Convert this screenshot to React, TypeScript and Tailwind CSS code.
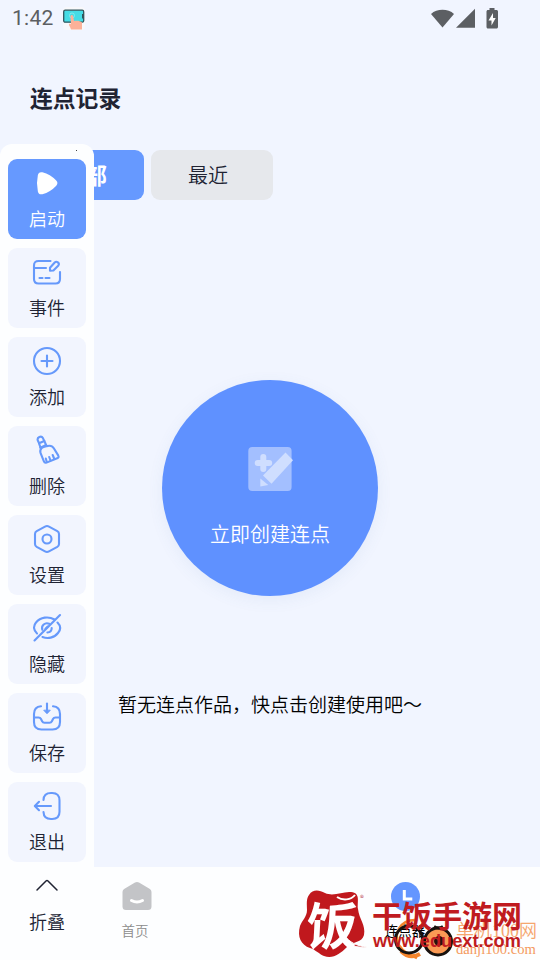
import React from 'react';

interface ToolItem {
  label: string;
  icon: React.ReactNode;
  active?: boolean;
}

const ToolIcon: React.FC<{ children: React.ReactNode }> = ({ children }) => (
  <svg
    viewBox="0 0 30 30"
    className="w-[30px] h-[30px]"
    fill="none"
    stroke="#6699fb"
    strokeWidth="2.1"
    strokeLinecap="round"
    strokeLinejoin="round"
  >
    {children}
  </svg>
);

const tools: ToolItem[] = [
  {
    label: '启动',
    active: true,
    icon: (
      <svg viewBox="0 0 30 30" className="w-[30px] h-[30px]">
        <path
          d="M9.500 8C13.500 9 18 11.500 21.500 15.200 18 19 13.500 21.500 9.500 22.500 8.500 18 8.500 12.500 9.500 8Z"
          fill="#fff"
          stroke="#fff"
          strokeWidth="7.500"
          strokeLinejoin="round"
        />
      </svg>
    ),
  },
  {
    label: '事件',
    icon: (
      <ToolIcon>
        <path d="M18.500 4H6.500C3.500 4 2 5.500 2 8.500V22c0 3 1.500 4.500 4.500 4.500h17c3 0 4.500-1.500 4.500-4.500v-7" />
        <path d="M2 11h12M7.500 21h3M13.500 21h4" />
        <path d="M18 13.700v-3l4.700-5.200c2-2 5.300.8 3.700 3l-5 5Z" />
      </ToolIcon>
    ),
  },
  {
    label: '添加',
    icon: (
      <ToolIcon>
        <circle cx="15" cy="15" r="13" />
        <path d="M15 9.500v11M9.500 15h11" />
      </ToolIcon>
    ),
  },
  {
    label: '删除',
    icon: (
      <ToolIcon>
        <path d="M7 8 5.700 5.300c-.8-3.200 3.600-5 5.200-2.200L12.300 6" />
        <path d="M7 8.300 12.300 6l1.700 3.800M7 8.300l1.500 4.200" />
        <path d="M8.300 12.700 14.200 10" />
        <path d="M9.500 13.200c-1.300 1.400-1.500 3.300-.9 5l3.200 8c.5 1.400 1.300 1.900 2.700 1.400l10.700-4.300c1.500-.6 1.800-1.500 1-2.900l-4.400-7.100c-1.400-2.300-3.800-3-6.300-2.300-2.300.6-4.300.9-6 2.200Z" />
        <path d="m14.800 27-1-3.500M18.500 25.500l-1.300-3.500M22.300 24l-1.600-4" />
      </ToolIcon>
    ),
  },
  {
    label: '设置',
    icon: (
      <ToolIcon>
        <path d="M13 2.600c1.300-.7 2.700-.7 4 0l8.300 4.500c1.200.7 1.700 1.500 1.700 2.900v10c0 1.400-.5 2.200-1.700 2.900L17 27.400c-1.300.7-2.700.7-4 0l-8.300-4.500C3.500 22.200 3 21.400 3 20V10c0-1.400.5-2.200 1.700-2.900Z" />
        <circle cx="15" cy="15" r="4.500" />
      </ToolIcon>
    ),
  },
  {
    label: '隐藏',
    icon: (
      <ToolIcon>
        <path d="M2.500 27.500 28 2" />
        <path d="M5 20.500C1.500 17.500 1 13 4 9.500 8.500 4 16.500 3 22.500 6.500M25.500 9.500C28.500 12.500 29 16.500 26 20c-3.800 5-10.500 6-15.500 4" />
        <path d="M10.300 16.800C9 12.700 13 9 17.200 10.800M19.700 15c0 2.500-1.800 4.300-4.300 4.500M13.500 15.800l2.200-2.200" />
      </ToolIcon>
    ),
  },
  {
    label: '保存',
    icon: (
      <ToolIcon>
        <path d="M9 4.200C4.500 4.500 2 7.500 2 12v8c0 5 2.500 7.500 7.500 7.500h11c5 0 7.500-2.500 7.500-7.500v-8c0-4.500-2.500-7.500-7-7.800" />
        <path d="M2 15.500h4.500c1.200 0 2 .5 2.500 1.500l1.100 2.200c.5 1 1.300 1.500 2.400 1.500h5c1.100 0 1.900-.5 2.400-1.500L21 17c.5-1 1.300-1.500 2.500-1.500H28" />
        <path d="M15 1.500V10" />
        <path d="m12 8.500 3 3.200 3-3.200Z" fill="#6699fb" strokeWidth="1" />
      </ToolIcon>
    ),
  },
  {
    label: '退出',
    icon: (
      <ToolIcon>
        <path d="M11.500 9c.2-5 2.500-7 7.500-7h1.200c5 0 7.300 2.500 7.300 7.500v11.200c0 5-2.300 7.300-7.300 7.300H19c-5 0-7.300-2-7.500-7" />
        <path d="M19 15H3M7 10.800 2.800 15 7 19.200" />
      </ToolIcon>
    ),
  },
];

const StatusBar: React.FC = () => (
  <div className="h-9 shrink-0 pl-3 pt-px flex items-center justify-between">
    <div className="flex items-center gap-2">
      <span className="w-[42px] font-['Roboto',sans-serif] text-[21px] leading-none tracking-[0.3px] text-[#5c5e62]">
        1:42
      </span>
      <svg viewBox="0 0 24 24" className="w-6 h-6">
        <rect x="1" y="0" width="22" height="23" rx="4" fill="#f8f8fb" />
        <rect x="1.700" y="3.200" width="20" height="12" rx="1.500" fill="#45dce5" stroke="#31545c" strokeWidth="1.300" />
        <path d="M20 7h1.500v4.500H20Z" fill="#31545c" />
        <circle cx="10" cy="8.500" r="2.500" fill="none" stroke="#8beef0" strokeWidth=".8" />
        <path d="M8.500 9.500c0-2 2.500-2 2.700 0l.8 4.500c3-.5 6.500-.2 8 1.500v7H9c-.5-2-1.500-3-2-4.500-.3-1 .5-1.800 2-.8Z" fill="#fbb199" />
      </svg>
    </div>
    <svg viewBox="0 0 68 22" className="w-[68px] h-[22px] mr-[41px]" fill="#5c5f63">
      <path d="M0 6C6 .4 17 .4 23 6L11.500 19.500Z" />
      <path d="M44 .7v19H25Z" />
      <path d="M58.500 0h5v2h2c.8 0 1.500.7 1.500 1.500V19c0 .8-.7 1.500-1.500 1.500h-8.500c-.8 0-1.500-.7-1.500-1.500V3.500c0-.8.7-1.500 1.500-1.500h1.500Z" />
      <path d="M62 5 57.500 12.500h3V17.500l4.200-7.500H62Z" fill="#fff" />
    </svg>
  </div>
);

const CreateIcon: React.FC = () => (
  <svg viewBox="0 0 46 46" className="w-[46px] h-[46px]">
    <rect x="1.300" y="1" width="43.300" height="44" rx="4" fill="#a3bfff" />
    <path d="M16.300 11v12M10.700 17h11.500" stroke="#cfdeff" strokeWidth="6" strokeLinecap="round" />
    <path d="M38.500 6.500 46 14.200 24.500 37.800 16 29.500Z" fill="#cfdeff" />
    <path d="M13.300 32.500v8l8-1.500Z" fill="#cfdeff" />
  </svg>
);

const BottomNav: React.FC = () => (
  <nav className="h-[93px] shrink-0 bg-[#fdfeff] grid grid-cols-2">
    <div className="flex flex-col items-center pt-[14px] gap-[9px]">
      <svg viewBox="0 0 30 30" className="w-[30px] h-[30px] ml-[3px]">
        <path
          d="M13 1.500c1.300-.8 2.700-.8 4 0l10.500 6.300c1.400.9 2 2 2 3.700v14c0 2.500-1.300 3.500-3.500 3.500H4c-2.200 0-3.500-1-3.500-3.500v-14c0-1.700.6-2.800 2-3.700Z"
          fill="#c3c4c7"
        />
        <path d="M9.500 19.500c3.500 2 7.500 2 11 0" stroke="#fff" strokeWidth="3" strokeLinecap="round" fill="none" />
      </svg>
      <span className="text-[13.500px] leading-[20px] font-[350] text-[#8c8c8c]">首页</span>
    </div>
    <div className="flex flex-col items-center pt-[14px] gap-[9px]">
      <svg viewBox="0 0 30 30" className="w-[30px] h-[30px]">
        <circle cx="15.500" cy="15.500" r="14.500" fill="#6496ff" />
        <path d="M14.300 9v9h8" stroke="#fff" strokeWidth="3" fill="none" />
      </svg>
      <span className="text-[13.500px] leading-[20px] text-black">连点器</span>
    </div>
  </nav>
);

const ToolPanel: React.FC = () => (
  <aside className="absolute left-0 top-[144px] w-[94px] h-[816px] bg-[#fdfeff] rounded-t-xl pt-[15px] flex flex-col items-center gap-[9px]">
    <span className="absolute left-[76px] top-[6px] w-px h-px bg-[#444]" />
    {tools.map((tool) => (
      <button
        key={tool.label}
        className={
          tool.active
            ? 'w-[78px] h-20 shrink-0 rounded-[9px] bg-[#6699ff] text-white flex flex-col items-center pt-[9px]'
            : 'w-[78px] h-20 shrink-0 rounded-[9px] bg-[#f2f5fe] text-[#202333] flex flex-col items-center pt-[9px]'
        }
      >
        {tool.icon}
        <span className="mt-[7px] text-[18px] leading-[26px] font-[350]">{tool.label}</span>
      </button>
    ))}
    <button className="w-[78px] flex flex-col items-center text-[#202333]">
      <svg
        viewBox="0 0 24 14"
        className="w-6 h-[14px] mt-[7px]"
        fill="none"
        stroke="currentColor"
        strokeWidth="1.500"
        strokeLinecap="round"
        strokeLinejoin="round"
      >
        <path d="m2 12 9-9c.7-.6 1.300-.6 2 0l9 9" />
      </svg>
      <span className="mt-4 text-[18px] leading-[26px] font-[350]">折叠</span>
    </button>
  </aside>
);

const SiteMarks: React.FC = () => (
  <div className="absolute left-[290px] top-[880px] w-[250px] h-20 overflow-hidden pointer-events-none">
    <svg viewBox="0 0 250 80" className="absolute inset-0 w-[250px] h-20">
      {/* ring and dot mark */}
      <path d="M125 40c-15 0-22 14-16 25 4 7 11 10 18 13" fill="none" stroke="#f5852c" strokeWidth="2.500" />
      <path d="M111 71c4 4 10 8 19 3" fill="none" stroke="#f5852c" strokeWidth="4" />
      <circle cx="119" cy="59.500" r="13.500" fill="none" stroke="#17110e" strokeWidth="3" />
      <circle cx="148" cy="61.500" r="13.500" fill="#fa9a55" stroke="#17110e" strokeWidth="3" />
      <path d="M144 46.500c3 2 6 2 9 0" stroke="#17110e" strokeWidth="3" fill="none" />
      <circle cx="149" cy="61" r="5" fill="#26120c" />
      {/* red badge */}
      <path
        d="M19 15c4-6 10-5 16-2 9 4 18-2 26-1 10 1 6 10 7 17 1 10 8 16 6 26-2 8-11 6-17 12-7 7-14 12-23 9-5-2-8-6-14-8C11 65 7 57 10 46c2-6 7-9 7-16 0-6-1-11 2-15Z"
        fill="#c0181d"
      />
      <path d="M47 17c6 4 14 3 18-2" stroke="#fff" strokeWidth="2" fill="none" />
      <path d="M53 54c7 9 14 12 24 13-9 1-18-1-27-9Z" fill="#c0181d" stroke="#fff" strokeWidth="1" />
    </svg>
    <span className="absolute left-[17px] top-[13px] text-[51px] leading-[60px] font-bold text-white -skew-x-3">饭</span>
    <span className="absolute left-[70px] top-[11px] text-[8px] leading-[14px] text-[#b94a50]">®</span>
    <span className="absolute left-[166px] top-[38px] font-['Liberation_Serif','Noto_Sans_CJK_SC',serif] text-[18px] leading-[26px] font-[350] whitespace-nowrap text-[#f6a66e]">
      单机100网
    </span>
    <span className="absolute left-[166px] top-[60px] font-['Liberation_Serif',serif] text-[14.600px] leading-[18px] whitespace-nowrap text-[#f49a60]">
      danji100.com
    </span>
    <span className="absolute left-[82px] top-[14px] text-[30px] leading-[40px] font-bold whitespace-nowrap text-[#c01b20]">
      干饭手游网
    </span>
    <span className="absolute left-[83px] top-[50px] font-['Liberation_Sans',sans-serif] text-[18.200px] leading-[22px] font-bold whitespace-nowrap text-[#c01b20]">
      www.eduext.com
    </span>
  </div>
);

export default function App() {
  return (
    <div className="relative w-[540px] h-[960px] overflow-hidden bg-[#f1f5ff] flex flex-col font-['Noto_Sans_CJK_SC',sans-serif]">
      <StatusBar />

      <h1 className="mt-[45px] ml-[30px] text-[22.800px] leading-[34px] font-bold text-[#202333]">连点记录</h1>

      {/* Filter tabs */}
      <div className="mt-[35px] ml-[22px] flex gap-[7px]">
        <button className="w-[122px] h-[50px] rounded-[9px] bg-[#6699ff] text-white text-[23px] leading-[30px] font-bold pb-[3px] pl-[2px]">全部</button>
        <button className="w-[122px] h-[50px] rounded-[9px] bg-[#e6e8ec] text-[#202333] text-[20px] font-[350] pr-2">最近</button>
      </div>

      {/* Create action */}
      <main className="flex-1 pt-[180px] flex flex-col items-center">
        <button className="w-[216px] h-[216px] shrink-0 rounded-full bg-[#5f91ff] shadow-[0_4px_16px_rgba(80,110,180,0.08)] flex flex-col items-center pt-[66px]">
          <CreateIcon />
          <span className="mt-[27px] text-[20px] leading-[30px] font-[350] text-white">立即创建连点</span>
        </button>
        <p className="mt-[94px] text-[19px] leading-[28px] font-[350] text-black whitespace-nowrap">
          暂无连点作品，快点击创建使用吧～
        </p>
      </main>

      <BottomNav />
      <ToolPanel />
      <SiteMarks />
    </div>
  );
}
